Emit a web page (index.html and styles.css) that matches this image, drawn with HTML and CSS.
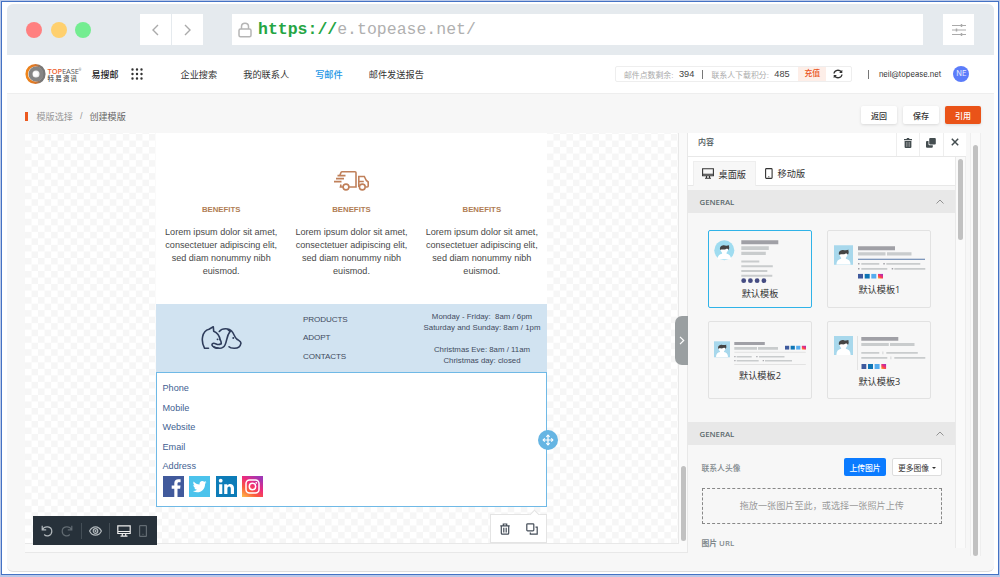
FILE: index.html
```html
<!DOCTYPE html>
<html lang="zh-CN">
<head>
    <meta charset="UTF-8">
    <meta name="viewport" content="width=device-width, initial-scale=1.0">
    <title>创建模版</title>
    <link rel="stylesheet" href="styles.css">
</head>
<body>
    <!-- shared shapes -->
    <svg class="defs" width="0" height="0">
        <defs>
            <linearGradient id="insta" x1="0" y1="1" x2="0.7" y2="0">
                <stop offset="0" stop-color="#fdc14b"/>
                <stop offset="0.35" stop-color="#fb5a3c"/>
                <stop offset="0.65" stop-color="#ee2a7b"/>
                <stop offset="1" stop-color="#a236b4"/>
            </linearGradient>
            <linearGradient id="ring" x1="0" y1="0" x2="1" y2="0">
                <stop offset="0" stop-color="#f08519"/>
                <stop offset="0.5" stop-color="#d9752a"/>
                <stop offset="0.8" stop-color="#777"/>
            </linearGradient>
            <symbol id="person" viewBox="0 0 20 20">
                <path d="M2.500 20c0-4 2-6 5-6.500v-1C6 11 5.500 9 5.500 7h9c0 2-.5 4-2 5.500v1c3 .5 5 2.500 5 6.500z" fill="#fff"/>
                <path d="M5.300 9.500C4.500 6.500 6 4.500 9 4.300c1.500 0 2 .7 3.500.4 1-.2 1.800-.6 3-.5-.5.5-.3.8-.2 1.300.4 1.500 0 3-.6 4C14 8 13 7.500 11.500 8.500 9.500 9.500 7 8 5.300 9.500z" fill="#444"/>
            </symbol>
            <symbol id="dots4" viewBox="0 0 25 5">
                <rect width="5" height="5" fill="#3f5a9d"/>
                <rect x="6.700" width="5" height="5" fill="#0f75b5"/>
                <rect x="13.300" width="5" height="5" fill="#55acee"/>
                <rect x="20" width="5" height="5" fill="url(#insta)"/>
            </symbol>
        </defs>
    </svg>

    <div class="frame">
        <div class="window">
            <div class="titlebar">
                <span class="light red"></span>
                <span class="light yellow"></span>
                <span class="light green"></span>
                <div class="history">
                    <span><svg width="9" height="12" viewBox="0 0 9 12"><path d="M7 1L2 6l5 5"/></svg></span>
                    <span><svg width="9" height="12" viewBox="0 0 9 12"><path d="M2 1l5 5-5 5"/></svg></span>
                </div>
                <div class="address">
                    <svg width="14" height="16" viewBox="0 0 14 16"><rect x="1" y="7" width="12" height="7.800" rx="1.500"/><path d="M3.500 7V4.500C3.500 0 10.500 0 10.500 4.500V7"/></svg>
                    <span class="scheme">https://</span><span class="host">e.topease.net/</span>
                </div>
                <div class="settings">
                    <svg width="14" height="12" viewBox="0 0 14 12"><path d="M0 1.500h14M0 6h14M0 10.500h14"/><path class="knob" d="M9.500 0v3M4.500 4.500v3M9.500 9v3"/></svg>
                </div>
            </div>

            <header class="header">
                <svg class="logo" width="21" height="22" viewBox="0 0 21 22">
                    <circle cx="10.500" cy="11" r="8.800" fill="none" stroke="url(#ring)" stroke-width="2.600"/>
                    <circle cx="11" cy="11" r="5.500" fill="#eee" stroke="#858585" stroke-width="4"/>
                    <circle cx="10.500" cy="11" r="2.500" fill="#fff"/>
                </svg>
                <div class="brand">
                    <div class="brand-en"><b>TOP</b>EASE<sup>®</sup></div>
                    <div class="brand-cn">特易资讯</div>
                </div>
                <span class="product">易搜邮</span>
                <svg class="apps" width="12" height="12" viewBox="0 0 12 12"><path d="M1.500 1.500h0M6 1.500h0M10.500 1.500h0M1.500 6h0M6 6h0M10.500 6h0M1.500 10.500h0M6 10.500h0M10.500 10.500h0"/></svg>
                <nav class="nav">
                    <a>企业搜索</a>
                    <a>我的联系人</a>
                    <a class="active">写邮件</a>
                    <a>邮件发送报告</a>
                </nav>
                <div class="points">
                    <span class="label">邮件点数剩余:</span><span class="num">394</span>
                    <i class="bar"></i>
                    <span class="label">联系人下载积分:</span><span class="num">485</span>
                    <span class="charge">充值</span>
                    <svg width="10" height="10" viewBox="0 0 10 10"><path d="M1 4.500C1.500 1 6 .2 8.300 2.800M9 5.500C8.500 9 4 9.800 1.700 7.200" fill="none" stroke="#333" stroke-width="1.300"/><path d="M9.300.8v3.200H6.100zM.7 9.200V6h3.200z" fill="#333"/></svg>
                </div>
                <i class="bar user-bar"></i>
                <span class="email">neil@topease.net</span>
                <span class="avatar">NE</span>
            </header>

            <div class="crumbs">
                <i class="mark"></i>
                <span>模版选择</span><span class="slash">/</span><span class="current">创建模版</span>
                <div class="actions">
                    <button>返回</button>
                    <button>保存</button>
                    <button class="primary">引用</button>
                </div>
            </div>

            <main class="workspace">
                <section class="editor">
                    <div class="canvas">
                        <div class="mail">
                            <div class="benefits">
                                <div class="benefit">
                                    <div class="pic"></div>
                                    <h3>BENEFITS</h3>
                                    <p>Lorem ipsum dolor sit amet,<br>consectetuer adipiscing elit,<br>sed diam nonummy nibh<br>euismod.</p>
                                </div>
                                <div class="benefit">
                                    <div class="pic">
                                        <svg width="35" height="20" viewBox="0 0 35 20"><path d="M6 4L7 1.500Q7.300.8 8.200.8H21Q22 .8 22 1.800V16H15M9 16H6.500L7 13.500M3.500 4.600h8M2 7.600h8M0 10.600h7.500M24.800 16V5.500h5.500l2 4 1.900 1.500V15q0 1-1 1h-1.500M24.800 10.500h5"/><circle cx="12" cy="16" r="2.900"/><circle cx="28.300" cy="16" r="2.900"/></svg>
                                    </div>
                                    <h3>BENEFITS</h3>
                                    <p>Lorem ipsum dolor sit amet,<br>consectetuer adipiscing elit,<br>sed diam nonummy nibh<br>euismod.</p>
                                </div>
                                <div class="benefit">
                                    <div class="pic"></div>
                                    <h3>BENEFITS</h3>
                                    <p>Lorem ipsum dolor sit amet,<br>consectetuer adipiscing elit,<br>sed diam nonummy nibh<br>euismod.</p>
                                </div>
                            </div>
                            <div class="info">
                                <div class="pets">
                                    <svg width="41" height="24" viewBox="0 0 41 24"><path d="M7.500 22.300H3.600C-.5 15 1 5 8 3.300L12.300.8l.4 4.400c3.500 1.500 5.800 4.500 6.400 8.500"/><path d="M19 13.500c.8 1 1.500 2 1.200 4.500M19.500 18c-3 2-5-1.500-7.500-.6-1.800.9-1 3 1 3.600 4 1.600 9 2 11-2 2-4 1.500-9 5-13.500"/><path d="M18.300 5.500C21 2 28 1.800 31 5.500c2 2.200 2.400 5.500 4.700 7.500 2 1.500 4.600 2 4.200 4.300-.5 2.700-2.500 5-6.400 5-2 0-4.200.1-5.500-1.500M29 5.500l-2-1.800M17 22c-2 .3-3.500-.2-4-1"/><path d="M16.500 13.300h.1M32.200 12h.1" stroke-width="1.800"/></svg>
                                </div>
                                <div class="links">
                                    <span>PRODUCTS</span>
                                    <span>ADOPT</span>
                                    <span>CONTACTS</span>
                                </div>
                                <div class="hours">Monday - Friday:&nbsp; 8am / 6pm<br>Saturday and Sunday: 8am / 1pm<br><br>Christmas Eve: 8am / 11am<br>Christmas day: closed</div>
                            </div>
                            <div class="contact">
                                <div>Phone</div>
                                <div>Mobile</div>
                                <div>Website</div>
                                <div>Email</div>
                                <div>Address</div>
                                <div class="social">
                                    <svg viewBox="0 0 21 21"><rect width="21" height="21" fill="#415a9c"/><path d="M11.300 21v-8.200H8.700V9.600h2.600V7.300c0-2.800 1.600-4 4-4h2.300v3h-1.600c-1.200 0-1.500.5-1.500 1.500v1.800h3l-.4 3.200h-2.600V21z" fill="#fff"/></svg>
                                    <svg viewBox="0 0 21 21"><rect width="21" height="21" fill="#4cc3ec"/><path d="M17.500 6.200c-.5.200-1 .4-1.600.5.600-.4 1-.9 1.200-1.600-.6.300-1.200.6-1.800.7-2-2-5.300-.4-4.700 2.600-2.400-.1-4.500-1.200-5.900-3-.8 1.300-.4 3 .9 3.800-.5 0-.9-.1-1.300-.3 0 1.400 1 2.500 2.300 2.800-.4.100-.8.100-1.300 0 .4 1.200 1.400 2 2.700 2-1.200.9-2.700 1.300-4.200 1.200 5.500 3.500 12.500-.1 12.300-7.200.6-.4 1-.9 1.400-1.500z" fill="#fff"/></svg>
                                    <svg viewBox="0 0 21 21"><rect width="21" height="21" fill="#0d7cb8"/><circle cx="4.700" cy="4.700" r="1.900" fill="#fff"/><path d="M3.100 8.200h3.200v9.800H3.100zM8.200 8.200h3v1.300c1.500-2.400 6.800-2.100 6.800 2.500v6h-3.200v-5.200c0-3-3.400-2.800-3.400 0V18H8.200z" fill="#fff"/></svg>
                                    <svg viewBox="0 0 21 21"><rect width="21" height="21" fill="url(#insta)"/><g fill="none" stroke="#fff" stroke-width="1.500"><rect x="4" y="4" width="13" height="13" rx="3.500"/><circle cx="10.500" cy="10.500" r="3.200"/></g><circle cx="14.300" cy="6.800" r=".9" fill="#fff"/></svg>
                                </div>
                                <span class="handle"><svg width="12" height="12" viewBox="0 0 12 12"><path d="M6 1v10M1 6h10" stroke-width="1.200"/><path d="M4.400 2.800L6 1.200l1.600 1.600M4.400 9.200L6 10.800l1.600-1.600M2.800 4.400L1.200 6l1.600 1.600M9.200 4.400L10.800 6 9.200 7.600" stroke-width="1.200"/></svg></span>
                                <div class="popup">
                                    <svg width="10" height="12" viewBox="0 0 10 12"><path d="M.3 2.800h9.400M3.300 2.600V1h3.400v1.600M1.300 3v7.200q0 1 1 1h5.400q1 0 1-1V3M3.800 4.800v4.600M6.200 4.800v4.600"/></svg>
                                    <svg width="12" height="12" viewBox="0 0 12 12"><rect x=".8" y=".8" width="7" height="7" rx=".8"/><path d="M9.500 4.200h1.700v7H4.300V9.600"/></svg>
                                </div>
                            </div>
                        </div>
                        <div class="toolbar">
                            <svg width="12" height="12" viewBox="0 0 12 12"><path d="M1.200.8v4h4M1.500 4.600C3.500.5 10.800 1 10.800 6.300c0 4.700-5.300 5.700-7.600 3.200"/></svg>
                            <svg class="dim" width="12" height="12" viewBox="0 0 12 12"><path d="M10.800.8v4h-4M10.500 4.600C8.500.5 1.200 1 1.200 6.300c0 4.700 5.300 5.700 7.600 3.200"/></svg>
                            <i></i>
                            <svg width="13" height="10" viewBox="0 0 13 10"><path d="M.6 5C3.300-.6 9.700-.6 12.400 5 9.700 10.600 3.300 10.600.6 5z"/><circle cx="6.500" cy="5" r="2.300"/><circle cx="6.500" cy="5" r=".5"/></svg>
                            <i></i>
                            <svg class="lit" width="14" height="12" viewBox="0 0 14 12"><path d="M.8.8h12.400v7.700H.8zM.8 6.500h12.400M5.300 8.500v2.400M8.700 8.500v2.400M3.500 11.200h7"/></svg>
                            <svg class="dim" width="8" height="12" viewBox="0 0 8 12"><rect x=".6" y=".6" width="6.800" height="10.800" rx=".6"/><path d="M3.600 9.300h.8"/></svg>
                        </div>
                    </div>
                    <span class="scroll-thumb"></span>
                    <span class="collapse"><svg width="6" height="9" viewBox="0 0 6 9"><path d="M1 .8l3.700 3.700L1 8.200"/></svg></span>
                </section>

                <aside class="panel">
                    <div class="panel-head">
                        <span class="title">内容</span>
                        <span class="tool"><svg width="8" height="10" viewBox="0 0 8 10"><path d="M0 1h2.500l.5-1h2l.5 1H8v1.200H0zM.6 3h6.800v6q0 1-1 1H1.600q-1 0-1-1z" fill="#444d50"/><path d="M2.500 4v4.800M4 4v4.800M5.500 4v4.800" stroke="#bbb" stroke-width=".5"/></svg></span>
                        <span class="tool"><svg width="10" height="10" viewBox="0 0 10 10"><rect x="3.200" width="6.600" height="6.600" rx="1" fill="#444d50"/><path d="M2.500 3H1Q0 3 0 4v4.800q0 1 1 1h4.800q1 0 1-1V7.300H3.500q-1 0-1-1z" fill="#444d50"/></svg></span>
                        <span class="tool"><svg width="8" height="8" viewBox="0 0 8 8"><path d="M.8.8l6.400 6.400M7.200.8L.8 7.200" stroke="#444d50" stroke-width="1.500"/></svg></span>
                    </div>
                    <div class="panel-main">
                        <div class="panel-body">
                            <div class="tabs">
                                <div class="tab on"><svg width="12" height="11" viewBox="0 0 12 11"><path d="M.6.800h10.800v7H.6zM.6 6.300h10.800M4.500 8v2M7.500 8v2M3 10.300h6"/></svg>桌面版</div>
                                <div class="tab"><svg width="8" height="11" viewBox="0 0 8 11"><rect x=".6" y=".6" width="6.500" height="9.800" rx=".8"/><path d="M3.300 8.700h1"/></svg>移动版</div>
                            </div>
                            <div class="section-head">GENERAL<svg width="8" height="5" viewBox="0 0 8 5"><path d="M.5 4.500L4 1l3.500 3.500"/></svg></div>
                            <div class="templates">
                                <div class="card selected">
                                    <svg width="102" height="56" viewBox="0 0 102 56">
                                        <circle cx="15.300" cy="19.300" r="10" fill="#9fdcf0"/>
                                        <use href="#person" x="6.300" y="10.500" width="18" height="18"/>
                                        <path class="dark" d="M32.300 9.300h37v4h-37z"/>
                                        <path class="soft" d="M32.300 15.300h27.500v3.600H32.300zM32.300 20.700h24.500v3.300H32.300zM32.300 29.500h18v2h-18zM32.300 34.200h31.500v2H32.300zM32.300 39h26v2h-26zM32.300 43.700h31v2h-31z"/>
                                        <g fill="#454c82"><circle cx="34.700" cy="49.700" r="2.400"/><circle cx="41.400" cy="49.700" r="2.400"/><circle cx="48.100" cy="49.700" r="2.400"/><circle cx="54.900" cy="49.700" r="2.400"/></g>
                                    </svg>
                                    <span>默认模板</span>
                                </div>
                                <div class="card">
                                    <svg width="102" height="52" viewBox="0 0 102 52">
                                        <path d="M6 14.300h19v19.500H6z" fill="#a8d8ec"/>
                                        <use href="#person" x="6" y="14.800" width="19" height="19"/>
                                        <path class="dark" d="M30 15.300h37v4H30z"/>
                                        <path class="soft" d="M30 21.200h27.500v3.200H30zM59 21.200h24.500v3.200H59zM33.300 32h18v1.700h-18zM58.300 32h34v1.700h-34zM33.300 37h26v1.700h-26zM66.300 37h31v1.700h-31z"/>
                                        <path class="dark" d="M30 32h1.500v1.500H30zM55.300 32h1.500v1.500h-1.500zM30 37h1.500v1.500H30zM63.700 37h1.500v1.500h-1.500z"/>
                                        <path d="M30 27.700h67v1H30z" fill="#5778a8"/>
                                        <use href="#dots4" x="30" y="42.700" width="25" height="5"/>
                                    </svg>
                                    <span>默认模板1</span>
                                </div>
                                <div class="card">
                                    <svg width="102" height="47" viewBox="0 0 102 47">
                                        <path d="M5 19.300h16v16H5z" fill="#a8d8ec"/>
                                        <use href="#person" x="5" y="19.300" width="16" height="16"/>
                                        <path class="dark" d="M25.300 20h30.500v3H25.300z"/>
                                        <path class="soft" d="M25.300 25h22.700v2.700H25.300zM49 25h20v2.700H49zM27.700 34h15v1.500h-15zM50 34h25.500v1.500H50zM27.700 38h22v1.500h-22zM56 38h27v1.500H56z"/>
                                        <path class="dark" d="M25.300 34h1.200v1.300h-1.200zM47.300 34h1.200v1.300h-1.200zM25.300 38h1.200v1.300h-1.200zM53.700 38h1.200v1.300h-1.200z"/>
                                        <path d="M25.300 30.300h71.500M25.300 42.500h71.500" stroke="#ddd" stroke-width=".8"/>
                                        <use href="#dots4" x="76" y="23.500" width="21" height="4.300"/>
                                    </svg>
                                    <span>默认模板2</span>
                                </div>
                                <div class="card">
                                    <svg width="102" height="53" viewBox="0 0 102 53">
                                        <path d="M6 14h19v19H6z" fill="#a8d8ec"/>
                                        <use href="#person" x="6" y="14" width="19" height="19"/>
                                        <path d="M29.500 14v34" stroke="#ddd" stroke-width=".8"/>
                                        <path class="dark" d="M33.300 15h37v3.800h-37z"/>
                                        <path class="soft" d="M33.300 21h27.500v3H33.300zM62 21h24.500v3H62zM33.300 30h18v1.700h-18zM58.300 30h31.500v1.700H58.300zM33.300 35h26v1.700h-26zM66.300 35h31v1.700h-31zM54.500 29.500h.8v2.700h-.8zM62.500 34.500h.8v2.700h-.8z"/>
                                        <use href="#dots4" x="33.300" y="42" width="25" height="5"/>
                                    </svg>
                                    <span>默认模板3</span>
                                </div>
                            </div>
                            <div class="section-head">GENERAL<svg width="8" height="5" viewBox="0 0 8 5"><path d="M.5 4.500L4 1l3.500 3.500"/></svg></div>
                            <div class="form">
                                <div class="form-row">
                                    <label>联系人头像</label>
                                    <button class="upload">上传图片</button>
                                    <button class="more">更多图像<i></i></button>
                                </div>
                                <div class="dropzone">拖放一张图片至此，或选择一张照片上传</div>
                                <label>图片 URL</label>
                            </div>
                        </div>
                        <div class="panel-scroll"><span></span></div>
                    </div>
                </aside>
                <div class="page-scroll"><span></span></div>
            </main>
        </div>
    </div>
</body>
</html>
```

FILE: styles.css
```css
* {
    margin: 0;
    padding: 0;
    box-sizing: border-box;
}

body {
    width: 1000px;
    height: 577px;
    overflow: hidden;
    background: #b9c8e8;
    padding: 1px;
    font-family: 'Liberation Sans', 'Noto Sans CJK SC', sans-serif;
    font-size: 9px;
    color: #444;
    white-space: nowrap;
}

svg {
    display: block;
    flex: none;
    fill: none;
}

i {
    flex: none;
}

.defs {
    position: absolute;
}

button {
    font: inherit;
    border: none;
}

.frame {
    height: 574px;
    border: 1px solid #4472c4;
    background: white;
    padding: 2px 3px 2px 5px;
}

.window {
    height: 568px;
    width: 987px;
    border-radius: 6px;
    background: #f7f7f7;
    overflow: hidden;
    display: flex;
    flex-direction: column;
    border-bottom: 1px solid #ddd;
}

/* browser bar */
.titlebar {
    height: 51px;
    flex: none;
    background: #e5eaee;
    display: flex;
    align-items: center;
    padding: 0 20px 0 19px;
}

.light {
    width: 16px;
    height: 16px;
    border-radius: 50%;
    margin-right: 8.5px;
}

.red { background: #ff8080; }
.yellow { background: #ffd06e; }
.green { background: #74ed91; }

.history {
    display: flex;
    gap: 1px;
    margin-left: 40px;
}

.history span,
.settings {
    width: 31px;
    height: 31px;
    background: white;
    display: flex;
    align-items: center;
    justify-content: center;
}

.history svg {
    stroke: #aaa;
    stroke-width: 1.4;
}

.address {
    width: 691px;
    height: 31px;
    background: white;
    margin-left: 29px;
    margin-right: auto;
    padding-left: 6px;
    display: flex;
    align-items: center;
    font-family: 'Liberation Mono', monospace;
    font-size: 16.5px;
}

.address svg {
    stroke: #b5b5b5;
    stroke-width: 1.5;
    margin-right: 6.5px;
}

.scheme {
    color: #25a544;
    font-weight: bold;
}

.host {
    color: #b0b0b0;
}

.settings svg {
    stroke: #aaa;
    stroke-width: 1;
}

.knob {
    stroke-width: 1.5;
}

/* site header */
.header {
    height: 39px;
    flex: none;
    background: white;
    border-bottom: 1px solid #eee;
    display: flex;
    align-items: center;
    padding-left: 18px;
}

.brand {
    width: 34px;
    margin-left: 1.5px;
}

.brand-en {
    font: 7.5px/8px 'Open Sans', sans-serif;
    letter-spacing: -0.1px;
    color: #555;
}

.brand-en b {
    color: #ee6231;
    font-weight: 600;
}

.brand-en sup {
    font-size: 3px;
    vertical-align: 3px;
    line-height: 0;
}

.brand-cn {
    font-size: 6.5px;
    line-height: 7px;
    letter-spacing: 1.2px;
    font-weight: 500;
}

.product {
    font-weight: 500;
    color: #222;
    width: 27px;
    margin-left: 10px;
}

.apps {
    margin-left: 12.5px;
    stroke: #333;
    stroke-width: 2.4;
    stroke-linecap: round;
}

.nav {
    display: flex;
    gap: 26px;
    margin-left: 37.5px;
    font-size: 9.2px;
    color: #333;
}

.nav .active {
    color: #1b96e5;
    font-weight: 500;
}

.points {
    width: 237px;
    flex: none;
    height: 16px;
    margin-left: 191px;
    border: 1px solid #eee;
    border-radius: 2px;
    display: flex;
    align-items: center;
    padding-left: 8px;
    font-size: 7.9px;
    color: #aaa;
}

.num {
    font: 9.2px 'Liberation Sans', sans-serif;
    color: #444;
    width: 17px;
    margin-left: 5.5px;
}

.bar {
    width: 1px;
    height: 9px;
    background: #777;
    margin: 0 8px 0 6.5px;
}

.charge {
    background: #fdeee8;
    color: #e9541b;
    font-weight: 500;
    width: 28px;
    height: 14px;
    line-height: 14px;
    text-align: center;
    margin: 0 7px 0 7px;
}

.user-bar {
    margin: 0 10px 0 16px;
}

.email {
    font: 7.6px 'Inter', sans-serif;
    color: #333;
    width: 74.5px;
}

.avatar {
    width: 16px;
    height: 16px;
    border-radius: 50%;
    background: #5b7cfa;
    color: #e8edff;
    font: 7.5px/16px 'Inter', sans-serif;
    text-align: center;
}

/* breadcrumb */
.crumbs {
    height: 39px;
    flex: none;
    display: flex;
    align-items: center;
    padding: 5px 13px 0 18px;
    color: #999;
    font-size: 9.1px;
}

.mark {
    width: 3px;
    height: 9px;
    background: #ec5a20;
    margin-right: 8.5px;
}

.slash {
    margin: 0 7px;
}

.current {
    color: #666;
}

.actions {
    display: flex;
    gap: 6px;
    margin-left: auto;
    padding-bottom: 2px;
}

.actions button {
    width: 36px;
    height: 18px;
    background: white;
    border-radius: 2px;
    box-shadow: 0 1px 3px rgba(0,0,0,0.12);
    font-size: 8px;
    font-weight: 500;
    color: #333;
}

.actions .primary {
    background: #ea5318;
    color: white;
}

/* editor */
.workspace {
    display: flex;
    height: 423px;
    padding-left: 18px;
}

.editor {
    width: 663px;
    height: 420px;
    flex: none;
    position: relative;
    background: #fafafa;
    border-right: 1px solid #e8e8e8;
    border-bottom: 1px solid #e8e8e8;
}

.canvas {
    width: 654px;
    height: 411px;
    padding-left: 131px;
    position: relative;
    border-right: 1px solid #e8e8e8;
    border-bottom: 1px solid #e8e8e8;
    background: repeating-conic-gradient(#f6f6f6 0 25%, #fff 0 50%) 0 1px / 13.06px 13.06px;
}

.mail {
    width: 391px;
    background: white;
}

.benefits {
    display: flex;
    height: 171px;
    padding-top: 38px;
}

.benefit {
    flex: 1;
    text-align: center;
}

.pic {
    height: 20px;
    display: flex;
    justify-content: center;
}

.pic svg {
    stroke: #c0805a;
    stroke-width: 1.6;
}

.benefit h3 {
    font-size: 7.8px;
    line-height: 10px;
    color: #b07d54;
    margin: 14px 0 11px;
}

.benefit p {
    font-size: 9.1px;
    line-height: 13px;
    color: #484848;
}

.info {
    display: flex;
    height: 68px;
    background: #d1e3f1;
    color: #424b60;
}

.pets {
    width: 147px;
    padding: 22px 0 0 45px;
}

.pets svg {
    stroke: #2f3d5c;
    stroke-width: 1.6;
    stroke-linecap: round;
    stroke-linejoin: round;
}

.links {
    width: 114px;
    padding-top: 7px;
    display: flex;
    flex-direction: column;
    font-size: 8.1px;
    line-height: 18.4px;
    letter-spacing: -0.1px;
}

.hours {
    flex: 1;
    padding-top: 7px;
    text-align: center;
    font-size: 7.85px;
    line-height: 11px;
}

.contact {
    height: 135px;
    position: relative;
    border: 1px solid #6fb9e6;
    padding: 6px 0 0 5.5px;
    font-size: 9.15px;
    line-height: 19.5px;
    color: #3f5f92;
}

.social {
    display: flex;
    gap: 5.5px;
    margin-top: -1px;
}

.social svg {
    width: 21px;
    height: 21px;
}

.handle {
    position: absolute;
    right: -12px;
    top: 57px;
    width: 20px;
    height: 20px;
    border-radius: 50%;
    background: #66b5e3;
    display: flex;
    align-items: center;
    justify-content: center;
}

.handle svg {
    stroke: white;
}

.popup {
    position: absolute;
    right: -1px;
    top: 141px;
    width: 57px;
    height: 29px;
    background: white;
    border: 1px solid #e4e4e4;
    display: flex;
    align-items: center;
    gap: 16px;
    padding-left: 9px;
}

.popup::before {
    content: '';
    position: absolute;
    right: 8px;
    top: -4px;
    width: 6px;
    height: 6px;
    background: white;
    border: 1px solid #e4e4e4;
    border-right: none;
    border-bottom: none;
    transform: rotate(45deg);
}

.popup svg {
    stroke: #444d58;
    stroke-width: 1.2;
}

.toolbar {
    position: absolute;
    left: 8px;
    top: 383px;
    width: 124px;
    height: 29px;
    background: #27313a;
    display: flex;
    align-items: center;
    padding-left: 8px;
    stroke: #b3b9bd;
    stroke-width: 1.2;
}

.toolbar i {
    width: 1px;
    height: 16px;
    background: #444e56;
    margin: 0 7px 0 7.5px;
}

.toolbar .dim {
    stroke: #626b72;
    margin-left: 8px;
}

.toolbar .lit {
    stroke: #eee;
}

.scroll-thumb {
    position: absolute;
    right: 1px;
    top: 333px;
    width: 5px;
    height: 75px;
    border-radius: 3px;
    background: #c1c1c1;
}

.collapse {
    position: absolute;
    right: -1px;
    top: 183px;
    width: 13px;
    height: 49px;
    border-radius: 7px 0 0 7px;
    background: #9a9fa1;
    display: flex;
    align-items: center;
    justify-content: center;
}

.collapse svg {
    stroke: white;
    stroke-width: 1.2;
}

/* settings panel */
.panel {
    width: 278px;
    height: 420px;
    overflow: hidden;
    color: #4d575b;
}

.panel-head {
    height: 24px;
    display: flex;
    background: white;
    border-bottom: 1px solid #e8e8e8;
}

.title {
    flex: 1;
    padding-left: 10px;
    font-size: 8px;
    line-height: 19px;
    font-weight: 500;
}

.tool {
    width: 23.5px;
    border-left: 1px solid #eee;
    display: flex;
    justify-content: center;
    padding-top: 5px;
}

.panel-main {
    display: flex;
}

.panel-body {
    width: 268px;
    border-right: 1px solid #eaeaea;
}

.tabs {
    height: 29px;
    background: white;
    border-bottom: 1px solid #e8e8e8;
    padding: 4px 0 0 5px;
    display: flex;
    margin-bottom: 4px;
}

.tab {
    display: flex;
    align-items: center;
    gap: 4.5px;
    padding: 0 9px 1px 9px;
    height: 25px;
    font-size: 9.2px;
    color: #333;
}

.tab.on {
    background: #f7f7f7;
    border: 1px solid #eee;
    border-bottom: none;
    padding-left: 8px;
}

.tab svg {
    stroke: #333;
    stroke-width: 1.1;
}

.section-head {
    height: 23px;
    background: #e8e8e8;
    display: flex;
    align-items: center;
    justify-content: space-between;
    padding: 0 11px 0 11.5px;
    font: 600 7.8px 'Open Sans', sans-serif;
    color: #5b686d;
}

.section-head svg {
    stroke: #888;
    stroke-width: 0.9;
}

.templates {
    display: grid;
    grid-template-columns: 104px 104px;
    gap: 13px 15.4px;
    padding: 17px 0 23px 20px;
}

.card {
    height: 78px;
    border: 1px solid #e2e2e2;
    border-radius: 2px;
    text-align: center;
    font-size: 9.2px;
    line-height: 13px;
    color: #333;
    font-family: 'Open Sans', 'Noto Sans CJK SC', sans-serif;
}

.card.selected {
    border-color: #30b3e8;
}

.dark {
    fill: #a0a0a6;
}

.soft {
    fill: #c9cccd;
}

.form {
    padding: 13px 13px 0 13.5px;
    font-size: 7.8px;
}

.form label {
    color: #80888c;
    font-weight: 600;
    font-family: 'Open Sans', 'Noto Sans CJK SC', sans-serif;
}

.form-row {
    display: flex;
    align-items: center;
    gap: 6px;
}

.form-row label {
    margin-right: auto;
    font-weight: 500;
}

.form-row button {
    height: 18px;
    border-radius: 2px;
}

.upload {
    width: 42px;
    background: #0b7bff;
    color: white;
    font-weight: 500;
}

.more {
    width: 50px;
    background: white;
    border: 1px solid #ddd;
    color: #333;
}

.more i {
    display: inline-block;
    border: 2px solid transparent;
    border-top-color: #333;
    border-bottom: none;
    margin-left: 3px;
    vertical-align: 2px;
}

.dropzone {
    height: 36px;
    margin: 12px 0 13px;
    border: 1px dashed #888;
    text-align: center;
    font-size: 9.15px;
    line-height: 34px;
    color: #999;
}

.panel-scroll {
    width: 10px;
    background: #fafafa;
    border-right: 1px solid #eee;
    padding: 2px 0 0 2px;
}

.panel-scroll span {
    display: block;
    width: 5px;
    height: 81px;
    border-radius: 3px;
    background: #c1c1c1;
}

.page-scroll {
    width: 11px;
    margin-left: 4px;
    background: #fafafa;
    border-left: 1px solid #eee;
    border-right: 1px solid #eee;
    padding: 12px 2px 0;
}

.page-scroll span {
    display: block;
    width: 5px;
    height: 411px;
    border-radius: 3px;
    background: #c1c1c1;
}
```
